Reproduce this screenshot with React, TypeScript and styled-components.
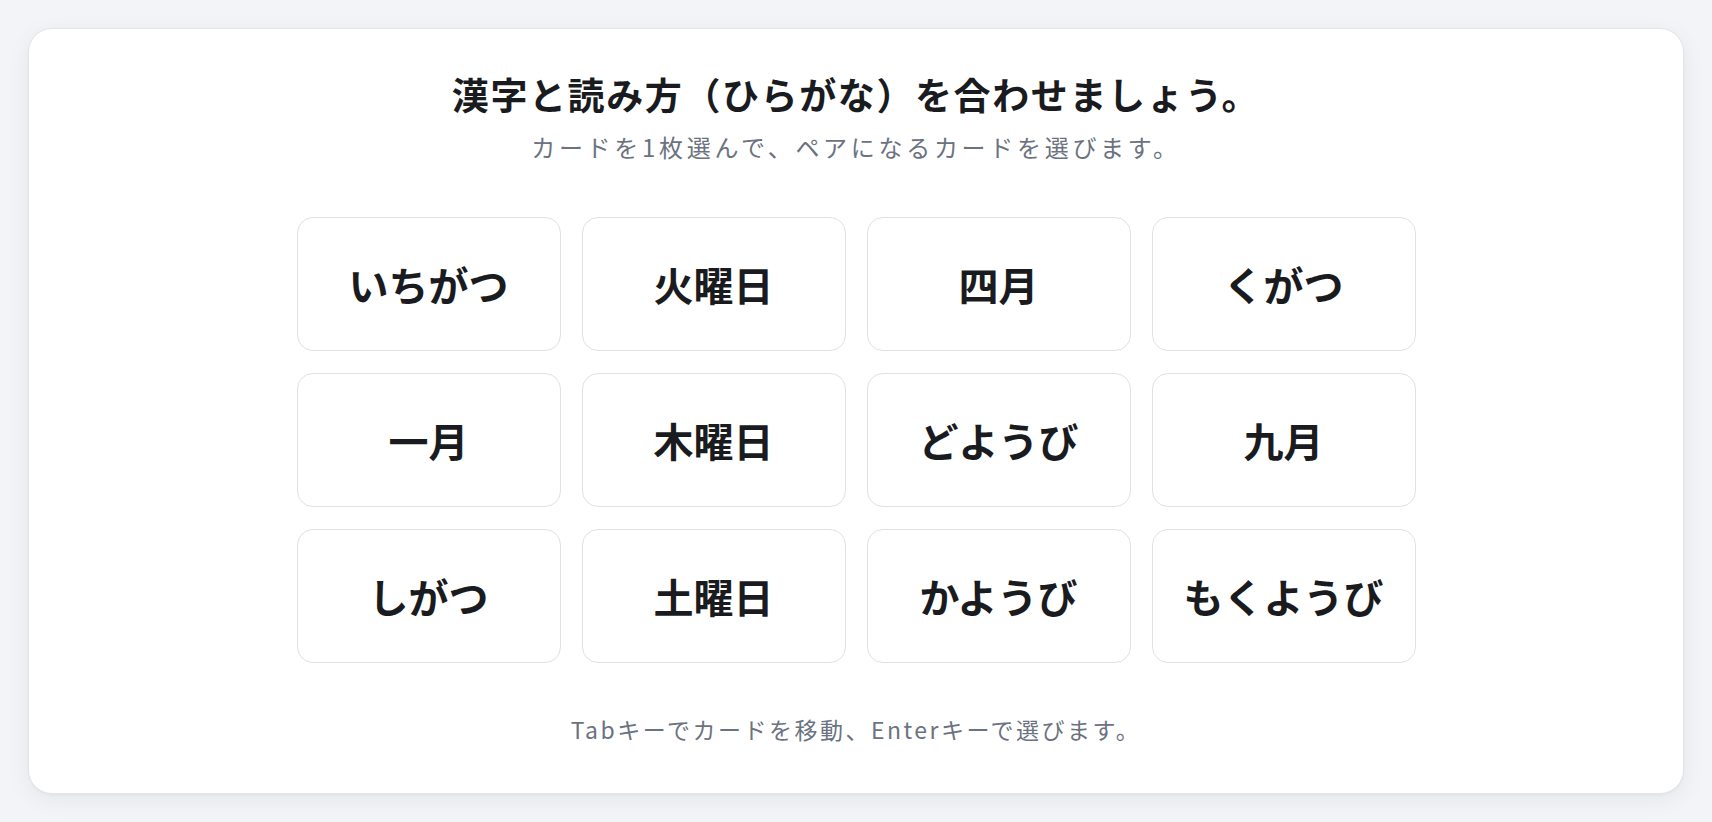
import React from "react";
import styled, { createGlobalStyle } from "styled-components";

const GlobalStyle = createGlobalStyle`
  * { box-sizing: border-box; }
  html, body { margin: 0; padding: 0; }
  body {
    background: #f3f4f7;
    font-family: "Noto Sans CJK JP", "Noto Sans", sans-serif;
    color: #1a1b1e;
  }
`;

const Page = styled.main`
  min-height: 100vh;
  padding: 28px;
  display: flex;
`;

const Panel = styled.section`
  flex: 1;
  background: #ffffff;
  border: 1px solid #e3e5ea;
  border-radius: 24px;
  box-shadow: 0 6px 24px rgba(17, 24, 39, 0.06), 0 1px 3px rgba(17, 24, 39, 0.04);
  padding: 42px 24px 49px;
  display: flex;
  flex-direction: column;
  align-items: center;
`;

const Title = styled.h1`
  margin: 0;
  font-size: 37px;
  line-height: 47px;
  font-weight: 700;
  letter-spacing: 1.6px;
  color: #1a1b1e;
`;

const Subtitle = styled.p`
  margin: 12px 0 0;
  font-size: 24px;
  line-height: 34px;
  letter-spacing: 3.7px;
  color: #6b7280;
`;

const Grid = styled.div`
  margin-top: 53px;
  display: grid;
  grid-template-columns: repeat(4, 264px);
  grid-auto-rows: 134px;
  column-gap: 21px;
  row-gap: 22px;
`;

const Tile = styled.button`
  display: flex;
  align-items: center;
  justify-content: center;
  background: #ffffff;
  border: 1.5px solid #dfe1e7;
  border-radius: 16px;
  font-family: inherit;
  font-size: 40px;
  font-weight: 700;
  color: #1a1b1e;
  cursor: pointer;
  padding: 0;
`;

const Hint = styled.p`
  margin: 51px 0 0;
  font-size: 23px;
  line-height: 30px;
  letter-spacing: 2.5px;
  color: #6b7280;
`;

const cards = [
  "いちがつ", "火曜日", "四月", "くがつ",
  "一月", "木曜日", "どようび", "九月",
  "しがつ", "土曜日", "かようび", "もくようび",
];

export default function App() {
  return (
    <>
      <GlobalStyle />
      <Page>
        <Panel>
          <Title>漢字と読み方（ひらがな）を合わせましょう。</Title>
          <Subtitle>カードを1枚選んで、ペアになるカードを選びます。</Subtitle>
          <Grid>
            {cards.map((c) => (
              <Tile key={c} type="button">{c}</Tile>
            ))}
          </Grid>
          <Hint>Tabキーでカードを移動、Enterキーで選びます。</Hint>
        </Panel>
      </Page>
    </>
  );
}
